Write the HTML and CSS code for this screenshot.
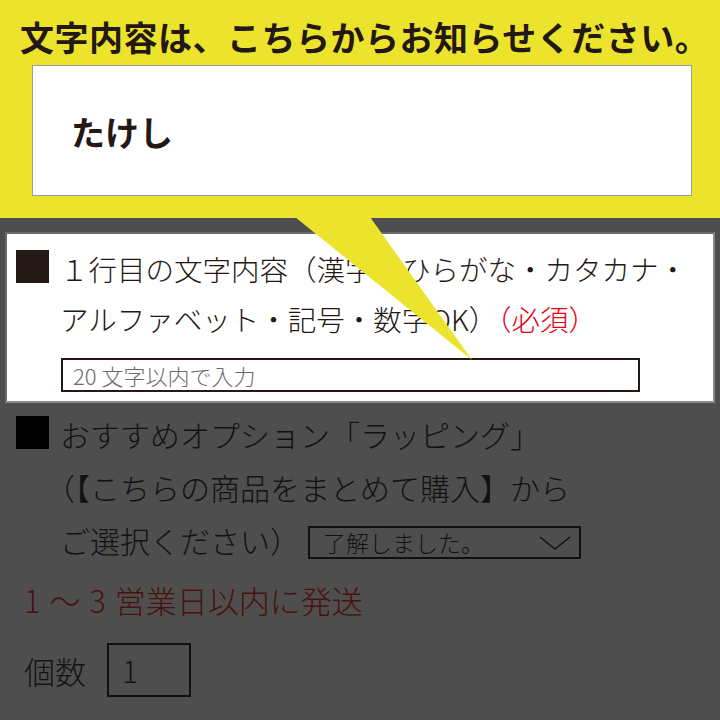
FILE: index.html
```html
<!DOCTYPE html>
<html lang="ja">
<head>
<meta charset="utf-8">
<title>文字内容</title>
<link rel="stylesheet" href="styles.css">
</head>
<body>
<div class="page">
  <header class="banner">
    <h1 class="banner-title">文字内容は、こちらからお知らせください。</h1>
    <div class="sample-box"><span class="sample-text">たけし</span></div>
  </header>

  <section class="panel">
    <div class="field">
      <span class="marker marker-brown"></span>
      <div class="field-body">
        <p class="field-label">１行目の文字内容（漢字・ひらがな・カタカナ・<br>アルファベット・記号・数字OK）<span class="required">（必須）</span></p>
        <div class="text-input">20 文字以内で入力</div>
      </div>
    </div>
  </section>

  <section class="option">
    <span class="marker marker-black"></span>
    <p class="option-label">おすすめオプション「ラッピング」<br><span class="half">（【</span>こちらの商品をまとめて購入】から<br>ご選択ください）<span class="select"><span class="select-text">了解しました。</span><svg class="chevron" width="32" height="16" viewBox="0 0 32 16"><polyline points="1,2 16,14 31,2" fill="none" stroke="#111" stroke-width="1.6"/></svg></span></p>
  </section>

  <p class="ship">1 ～ 3 営業日以内に発送</p>

  <div class="qty">
    <span class="qty-label">個数</span>
    <span class="qty-box">1</span>
  </div>

  <svg class="pointer" width="720" height="720" viewBox="0 0 720 720"><polygon points="295,217 370,217 472,360" fill="#ece42c"/></svg>
</div>
</body>
</html>
```
FILE: styles.css
```css
html, body {
  margin: 0;
  padding: 0;
}
body {
  width: 720px;
  height: 720px;
  overflow: hidden;
  background: #4e4e4e;
  font-family: "Noto Sans CJK JP", "Noto Sans", sans-serif;
  color: #141414;
}
.page {
  position: relative;
  width: 720px;
  height: 720px;
}
.banner {
  background: #ece42c;
  height: 218px;
  padding-top: 20px;
  box-sizing: border-box;
}
.banner-title {
  margin: 0;
  font-size: 34px;
  line-height: 34px;
  font-weight: 700;
  color: #231815;
  letter-spacing: 0.5px;
  padding-left: 20px;
  white-space: nowrap;
}
.sample-box {
  margin: 11px 0 0 32px;
  width: 660px;
  height: 131px;
  box-sizing: border-box;
  border: 1px solid #9c9c9c;
  background: #fff;
  display: flex;
  align-items: center;
  padding: 3px 0 0 38px;
}
.sample-text {
  font-size: 34px;
  font-weight: 700;
  color: #231815;
  line-height: 1;
}
.panel {
  margin: 14px 5px 0 5px;
  background: #fff;
  border: 2px solid #8a8a8a;
  border-top-color: #6a6a6a;
  border-left-color: #6a6a6a;
  padding: 10px 0 9px 9px;
}
.field {
  display: flex;
  align-items: flex-start;
  gap: 11px;
}
.marker {
  flex: none;
  width: 33px;
  height: 33px;
  margin-top: 6px;
}
.marker-brown {
  background: #231815;
}
.marker-black {
  background: #000;
  margin-top: 8px;
}
.field-body {
  display: flex;
  flex-direction: column;
}
.field-label {
  margin: 0;
  font-size: 28.5px;
  line-height: 50px;
  font-weight: 300;
  color: #231815;
  white-space: nowrap;
}
.required {
  color: #e60012;
}
.text-input {
  margin: 14px 0 0 1px;
  width: 579px;
  height: 34px;
  box-sizing: border-box;
  border: 2px solid #231815;
  font-size: 22px;
  line-height: 30px;
  color: #6b6b6b;
  font-weight: 300;
  padding-left: 10px;
}
.option {
  display: flex;
  align-items: flex-start;
  gap: 11px;
  padding: 5px 0 0 16px;
}
.option-label {
  margin: 0;
  font-size: 30px;
  line-height: 53px;
  font-weight: 300;
  color: #121212;
  white-space: nowrap;
}
.half {
  font-feature-settings: "halt";
}
.select {
  display: inline-flex;
  align-items: center;
  justify-content: space-between;
  vertical-align: middle;
  margin: -4px 0 0 8px;
  width: 273px;
  height: 33px;
  box-sizing: border-box;
  border: 2px solid #111;
  padding: 0 8px 0 13px;
}
.select-text {
  font-size: 23px;
  line-height: 29px;
}
.chevron {
  display: block;
}
.ship {
  margin: 13px 0 0 24px;
  font-size: 31px;
  line-height: 40px;
  font-weight: 300;
  color: #4a1111;
  word-spacing: 2px;
}
.qty {
  display: flex;
  align-items: center;
  gap: 21px;
  margin: 23px 0 0 24px;
}
.qty-label {
  font-size: 31px;
  font-weight: 300;
}
.qty-box {
  width: 84px;
  height: 54px;
  box-sizing: border-box;
  border: 2px solid #111;
  font-size: 30px;
  font-weight: 300;
  line-height: 50px;
  padding-left: 13px;
}
.pointer {
  position: absolute;
  left: 0;
  top: 0;
  pointer-events: none;
}
```
